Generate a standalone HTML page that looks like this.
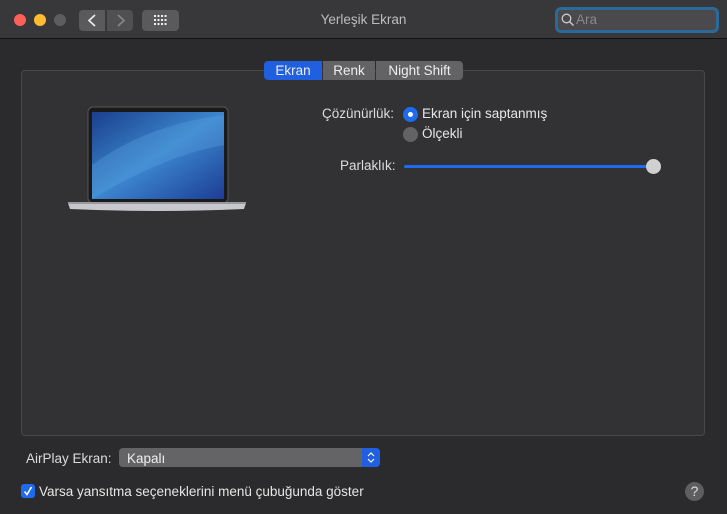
<!DOCTYPE html>
<html><head><meta charset="utf-8"><style>
*{margin:0;padding:0;box-sizing:border-box}
body{width:727px;height:514px;background:#2b2b2d;font-family:"Liberation Sans",sans-serif;font-size:13.5px;color:#dcdcdc;position:relative;overflow:hidden}
.a{position:absolute}
#tb{left:0;top:0;width:727px;height:39px;background:#38383b;border-bottom:1px solid #111}
.dot{width:12px;height:12px;border-radius:50%;top:14px}
.btn{background:#5a5a5d;border-radius:4px}
#panel{left:21px;top:70px;width:684px;height:366px;background:#323235;border:1px solid #48484b;border-radius:4px}
.tab{top:61px;height:19px;background:#636366;color:#eee;text-align:center;line-height:19px;font-size:13.5px}
</style></head><body>
<div id="tb" class="a">
<div class="a dot" style="left:14px;background:#fe5f57"></div>
<div class="a dot" style="left:34px;background:#febc2e"></div>
<div class="a dot" style="left:54px;background:#5d5d60"></div>
<div class="a btn" style="left:79px;top:10px;width:26px;height:21px;border-radius:4px 0 0 4px"></div>
<div class="a btn" style="left:107px;top:10px;width:26px;height:21px;border-radius:0 4px 4px 0;background:#505053"></div>
<svg class="a" style="left:79px;top:10px" width="54" height="21"><path d="M16 5 L10 10.5 L16 16" stroke="#eee" stroke-width="1.6" fill="none"/><path d="M39 5 L45 10.5 L39 16" stroke="#888" stroke-width="1.6" fill="none"/></svg>
<div class="a btn" style="left:142px;top:10px;width:37px;height:21px"></div>
<svg class="a" style="left:153px;top:14px" width="16" height="13"><g fill="#eee"><rect x="1" y="1" width="2" height="2"/><rect x="4.5" y="1" width="2" height="2"/><rect x="8" y="1" width="2" height="2"/><rect x="11.5" y="1" width="2" height="2"/><rect x="1" y="5" width="2" height="2"/><rect x="4.5" y="5" width="2" height="2"/><rect x="8" y="5" width="2" height="2"/><rect x="11.5" y="5" width="2" height="2"/><rect x="1" y="9" width="2" height="2"/><rect x="4.5" y="9" width="2" height="2"/><rect x="8" y="9" width="2" height="2"/><rect x="11.5" y="9" width="2" height="2"/></g></svg>
<div class="a" style="left:0;width:727px;top:12px;text-align:center;color:#bdbdbd;font-size:13.5px">Yerleşik Ekran</div>
<div class="a" style="left:555px;top:7px;width:164px;height:26px;border:3px solid #2a6a99;border-radius:6px;background:#4a4a4d"></div>
<svg class="a" style="left:561px;top:13px" width="14" height="14"><circle cx="5.5" cy="5.5" r="4.3" stroke="#ccc" stroke-width="1.3" fill="none"/><path d="M8.6 8.6 L12.5 12.5" stroke="#ccc" stroke-width="1.5"/></svg>
<div class="a" style="left:576px;top:12px;color:#8a8a8a">Ara</div>
</div>
<div id="panel" class="a"></div>
<div class="a tab" style="left:264px;width:58px;background:#1f5fe0;border-radius:4px 0 0 4px">Ekran</div>
<div class="a tab" style="left:323px;width:52px">Renk</div>
<div class="a tab" style="left:376px;width:87px;border-radius:0 4px 4px 0">Night Shift</div>
<svg class="a" style="left:66px;top:105px" width="182" height="110">
<defs><linearGradient id="g" x1="0" y1="0" x2="1" y2="1"><stop offset="0" stop-color="#1a3f8c"/><stop offset=".5" stop-color="#3c86cf"/><stop offset="1" stop-color="#1c3d94"/></linearGradient></defs>
<rect x="22" y="2" width="140" height="96" rx="5" fill="#1a1a1a" stroke="#555"/>
<rect x="26" y="7" width="132" height="87" fill="url(#g)"/>
<path d="M26 60 Q80 20 158 10 L158 40 Q100 50 26 94Z" fill="#5aa4e0" opacity=".35"/>
<path d="M2 98 L180 98 L178 104 Q90 108 4 104Z" fill="#c8c8cc"/>
<rect x="2" y="97" width="178" height="2" fill="#9a9a9e"/>
</svg>
<div class="a" style="left:322px;top:106px">Çözünürlük:</div>
<div class="a" style="left:403px;top:107px;width:15px;height:15px;border-radius:50%;background:#1f6bf0"></div>
<div class="a" style="left:408px;top:112px;width:5px;height:5px;border-radius:50%;background:#fff"></div>
<div class="a" style="left:422px;top:106px;color:#e6e6e6">Ekran için saptanmış</div>
<div class="a" style="left:403px;top:127px;width:15px;height:15px;border-radius:50%;background:#636366"></div>
<div class="a" style="left:422px;top:126px;color:#e6e6e6">Ölçekli</div>
<div class="a" style="left:340px;top:158px">Parlaklık:</div>
<div class="a" style="left:404px;top:165px;width:250px;height:3px;background:#1f6bf0;border-radius:2px"></div>
<div class="a" style="left:646px;top:159px;width:15px;height:15px;border-radius:50%;background:#d0d0d0"></div>
<div class="a" style="left:26px;top:451px">AirPlay Ekran:</div>
<div class="a" style="left:119px;top:448px;width:261px;height:19px;background:#646466;border-radius:4px"></div>
<div class="a" style="left:362px;top:448px;width:18px;height:19px;background:#1f5fe0;border-radius:0 4px 4px 0"></div>
<svg class="a" style="left:362px;top:448px" width="18" height="19"><path d="M6 8 L9 5 L12 8 M6 11 L9 14 L12 11" stroke="#fff" stroke-width="1.2" fill="none"/></svg>
<div class="a" style="left:127px;top:451px;color:#eee">Kapalı</div>
<div class="a" style="left:21px;top:484px;width:14px;height:14px;border-radius:3px;background:#1f6bf0"></div>
<svg class="a" style="left:21px;top:484px" width="14" height="14"><path d="M3.5 7.5 L6 10.5 L10.5 3" stroke="#fff" stroke-width="1.6" fill="none"/></svg>
<div class="a" style="left:39px;top:484px;color:#e6e6e6">Varsa yansıtma seçeneklerini menü çubuğunda göster</div>
<div class="a" style="left:685px;top:482px;width:19px;height:19px;border-radius:50%;background:#5e5e61;color:#ddd;text-align:center;line-height:19px;font-size:14px">?</div>
</body></html>
